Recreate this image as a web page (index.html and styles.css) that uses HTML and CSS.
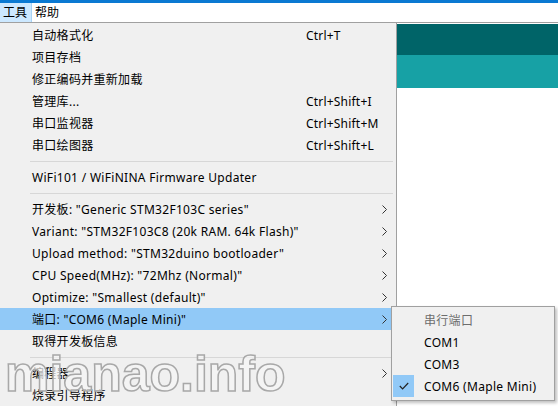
FILE: index.html
```html
<!DOCTYPE html>
<html>
<head>
<meta charset="utf-8">
<link rel="stylesheet" href="styles.css">
</head>
<body>
<div class="titlebar"></div>
<div class="menubar">
  <span class="mb-item active">工具</span>
  <span class="mb-item">帮助</span>
</div>
<div class="main">
  <div class="menu">
    <div class="row"><span class="label">自动格式化</span><span class="sc">Ctrl+T</span></div>
    <div class="row"><span class="label">项目存档</span></div>
    <div class="row"><span class="label">修正编码并重新加载</span></div>
    <div class="row"><span class="label">管理库...</span><span class="sc">Ctrl+Shift+I</span></div>
    <div class="row"><span class="label">串口监视器</span><span class="sc">Ctrl+Shift+M</span></div>
    <div class="row"><span class="label">串口绘图器</span><span class="sc">Ctrl+Shift+L</span></div>
    <div class="sep"></div>
    <div class="row"><span class="label">WiFi101 / WiFiNINA Firmware Updater</span></div>
    <div class="sep"></div>
    <div class="row"><span class="label">开发板: "Generic STM32F103C series"</span><svg class="arrow" width="5" height="9" viewBox="0 0 5 9"><polyline points="0.5,0.5 4.5,4.5 0.5,8.5"/></svg></div>
    <div class="row"><span class="label">Variant: "STM32F103C8 (20k RAM. 64k Flash)"</span><svg class="arrow" width="5" height="9" viewBox="0 0 5 9"><polyline points="0.5,0.5 4.5,4.5 0.5,8.5"/></svg></div>
    <div class="row"><span class="label">Upload method: "STM32duino bootloader"</span><svg class="arrow" width="5" height="9" viewBox="0 0 5 9"><polyline points="0.5,0.5 4.5,4.5 0.5,8.5"/></svg></div>
    <div class="row"><span class="label">CPU Speed(MHz): "72Mhz (Normal)"</span><svg class="arrow" width="5" height="9" viewBox="0 0 5 9"><polyline points="0.5,0.5 4.5,4.5 0.5,8.5"/></svg></div>
    <div class="row"><span class="label">Optimize: "Smallest (default)"</span><svg class="arrow" width="5" height="9" viewBox="0 0 5 9"><polyline points="0.5,0.5 4.5,4.5 0.5,8.5"/></svg></div>
    <div class="row hl"><span class="label">端口: "COM6 (Maple Mini)"</span><svg class="arrow" width="5" height="9" viewBox="0 0 5 9"><polyline points="0.5,0.5 4.5,4.5 0.5,8.5"/></svg></div>
    <div class="row"><span class="label">取得开发板信息</span></div>
    <div class="sep"></div>
    <div class="row"><span class="label">编程器</span><svg class="arrow" width="5" height="9" viewBox="0 0 5 9"><polyline points="0.5,0.5 4.5,4.5 0.5,8.5"/></svg></div>
    <div class="row"><span class="label">烧录引导程序</span></div>
  </div>
  <div class="editor">
    <div class="band dark"></div>
    <div class="band light"></div>
  </div>
</div>
<div class="submenu">
  <div class="srow disabled"><span class="check"></span><span>串行端口</span></div>
  <div class="srow"><span class="check"></span><span>COM1</span></div>
  <div class="srow"><span class="check"></span><span>COM3</span></div>
  <div class="srow"><span class="check on"><svg width="10" height="8" viewBox="0 0 10 8"><polyline points="0.8,4 3.6,6.8 9.2,1"/></svg></span><span>COM6 (Maple Mini)</span></div>
</div>
<div class="watermark">mianao.info</div>
</body>
</html>
```

FILE: styles.css
```css
html, body {
  margin: 0;
  padding: 0;
  width: 558px;
  height: 406px;
  overflow: hidden;
  background: #ffffff;
  font-family: "Noto Sans", "Noto Sans CJK SC", sans-serif;
  font-size: 12px;
  color: #000;
  position: relative;
}
.titlebar {
  height: 3px;
  background: #0a79d2;
}
.menubar {
  height: 19px;
  display: flex;
  align-items: stretch;
  background: #fff;
  border-bottom: 1px solid #a0a0a0;
}
.mb-item {
  display: flex;
  align-items: center;
  padding: 0 3px 0 3px;
  line-height: 19px;
}
.mb-item.active {
  background: #cce8ff;
  width: 25px;
  border-right: 1px solid #a9d3f5;
}
.main {
  display: flex;
  height: 383px;
}
.menu {
  width: 396px;
  border-right: 1px solid #a0a0a0;
  background: #f0f0f0;
  padding-top: 1px;
  flex: none;
}
.row {
  height: 22px;
  display: grid;
  grid-template-columns: 32px 274px 1fr 14px;
  align-items: center;
  white-space: nowrap;
  letter-spacing: 0.3px;
}
.row .label {
  grid-column: 2;
}
.row .sc {
  grid-column: 3;
  letter-spacing: 0.2px;
}
.row .arrow {
  grid-column: 4;
  fill: none;
  stroke: #333;
  stroke-width: 1;
}
.row.hl {
  background: #91c9f7;
}
.sep {
  height: 10px;
  display: flex;
  align-items: center;
  padding-left: 30px;
  padding-right: 3px;
}
.sep::after {
  content: "";
  flex: 1;
  height: 1px;
  background: #d7d7d7;
}
.editor {
  flex: 1;
  padding-top: 1px;
}
.band.dark {
  height: 31px;
  background: #006468;
}
.band.light {
  height: 33px;
  background: #17a1a5;
}
.submenu {
  position: absolute;
  left: 391px;
  top: 306px;
  width: 162px;
  height: 91px;
  border: 1px solid #a0a0a0;
  background: #f0f0f0;
  box-shadow: 2px 2px 3px rgba(0,0,0,0.25);
  padding-top: 2px;
  box-sizing: content-box;
  letter-spacing: 0.3px;
}
.srow {
  height: 22px;
  display: flex;
  align-items: center;
  white-space: nowrap;
}
.srow .check {
  width: 21px;
  height: 22px;
  margin-left: 1px;
  margin-right: 10px;
  display: flex;
  align-items: center;
  justify-content: center;
}
.srow .check.on {
  background: #91c9f7;
}
.srow .check svg {
  fill: none;
  stroke: #222;
  stroke-width: 1.2;
}
.srow.disabled {
  color: #6d6d6d;
}
.watermark {
  position: absolute;
  left: 5px;
  top: 346px;
  font-family: "Liberation Sans", Arial, sans-serif;
  font-weight: bold;
  font-size: 50px;
  line-height: 56px;
  color: rgba(245,245,245,0.7);
  -webkit-text-stroke: 1.5px #a8a8a8;
  pointer-events: none;
}
```
